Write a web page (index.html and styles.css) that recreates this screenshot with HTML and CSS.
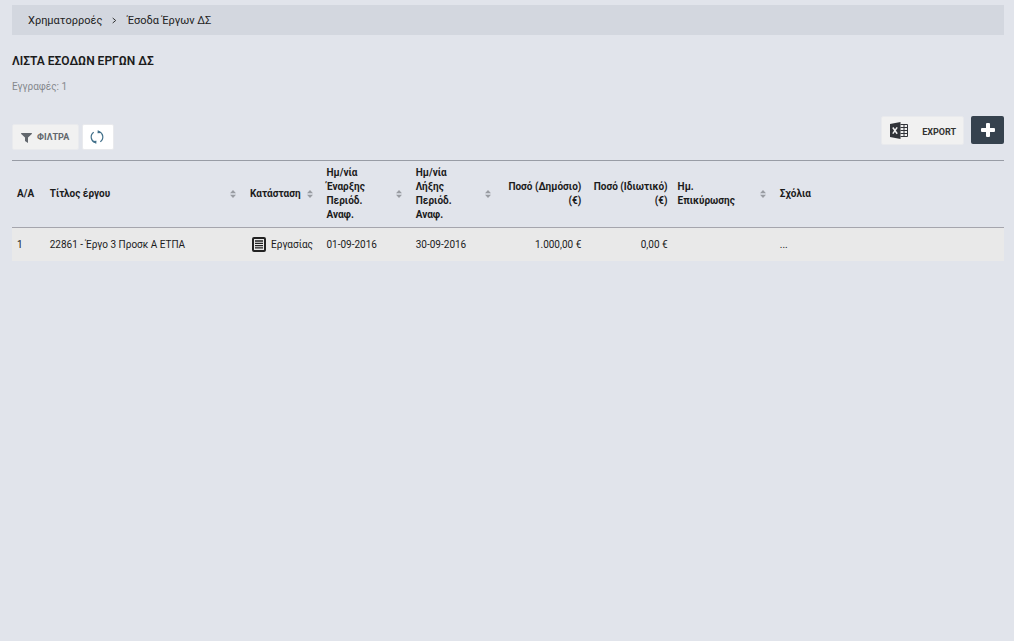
FILE: index.html
```html
<!DOCTYPE html>
<html lang="el">
<head>
<meta charset="utf-8">
<meta name="viewport" content="width=device-width, initial-scale=1">
<title>Έσοδα Έργων ΔΣ</title>
<link rel="stylesheet" href="styles.css">
</head>
<body>
<svg class="sprite" aria-hidden="true">
  <symbol id="sort" viewBox="0 0 6 8"><path d="M0 3.2 3 0l3 3.2zM0 4.8h6L3 8z"/></symbol>
</svg>
<nav class="breadcrumb" aria-label="Διαδρομή">
  <a href="#">Χρηματορροές</a>
  <svg class="chevron" viewBox="0 0 5 7" aria-hidden="true"><path d="m.7 1 3 2.500-3 2.500"/></svg>
  <a href="#">Έσοδα Έργων ΔΣ</a>
</nav>
<main>
  <h1>ΛΙΣΤΑ ΕΣΟΔΩΝ ΕΡΓΩΝ ΔΣ</h1>
  <p class="count">Εγγραφές: 1</p>
  <div class="toolbar">
    <div class="tools">
      <button class="btn filter" type="button">
        <svg width="11" height="11" viewBox="0 0 11 11" aria-hidden="true"><path fill="currentColor" d="M.5 1h10c.5 0 .6.500.3.900L7 5.500V11L4 9V5.500L.2 1.900C-.1 1.500 0 1 .5 1z"/></svg>
        ΦΙΛΤΡΑ
      </button>
      <button class="btn refresh" type="button" aria-label="Ανανέωση">
        <svg width="14" height="14" viewBox="0 0 14 14" aria-hidden="true"><g fill="none" stroke="currentColor" stroke-width="1.200"><path d="M5.200 12.500A5.800 5.800 0 0 1 3.700 2.200M8.800 1.500A5.800 5.800 0 0 1 10.300 11.800"/></g><path fill="currentColor" d="m2.500 11 4-.2-.3 3.200zM11.500 3l-4 .2L7.800 0z"/></svg>
      </button>
    </div>
    <div class="actions">
      <button class="btn export" type="button">
        <svg width="18" height="17" viewBox="0 0 18 17" aria-hidden="true"><path fill="#303338" d="M0 2 10.500 0v17L0 15z"/><path fill="none" stroke="#303338" d="M10.500 2.500h7v12h-7M10.500 5.500h7M10.500 8.500h7M10.500 11.500h7M14 2.500v12"/><path fill="none" stroke="#f1f1f1" stroke-width="1.500" d="m2.800 5.500 4.400 6.200M7.200 5.300l-4.400 6.400"/></svg>
        <span>EXPORT</span>
      </button>
      <button class="add" type="button" aria-label="Προσθήκη">
        <svg width="14" height="14" viewBox="0 0 14 14" aria-hidden="true"><path fill="#fff" d="M5 1q0-1 1-1h2q1 0 1 1v4h4q1 0 1 1v2q0 1-1 1H9v4q0 1-1 1H6q-1 0-1-1V9H1Q0 9 0 8V6q0-1 1-1h4z"/></svg>
      </button>
    </div>
  </div>
  <table>
    <colgroup>
      <col class="c-num"><col class="c-title"><col class="c-state"><col class="c-date"><col class="c-date"><col class="c-sum"><col class="c-sum"><col class="c-check"><col>
    </colgroup>
    <thead>
      <tr>
        <th scope="col">Α/Α</th>
        <th scope="col"><div class="sortable"><span>Τίτλος έργου</span><svg class="sort"><use href="#sort"/></svg></div></th>
        <th scope="col"><div class="sortable tight"><span>Κατάσταση</span><svg class="sort"><use href="#sort"/></svg></div></th>
        <th scope="col"><div class="sortable"><span>Ημ/νία Έναρξης Περιόδ. Αναφ.</span><svg class="sort"><use href="#sort"/></svg></div></th>
        <th scope="col"><div class="sortable"><span>Ημ/νία<br>Λήξης Περιόδ. Αναφ.</span><svg class="sort"><use href="#sort"/></svg></div></th>
        <th scope="col" class="amount">Ποσό (Δημόσιο) (€)</th>
        <th scope="col" class="amount">Ποσό (Ιδιωτικό) (€)</th>
        <th scope="col"><div class="sortable"><span>Ημ. Επικύρωσης</span><svg class="sort"><use href="#sort"/></svg></div></th>
        <th scope="col">Σχόλια</th>
      </tr>
    </thead>
    <tbody>
      <tr>
        <td>1</td>
        <td>22861 - Έργο 3 Προσκ Α ΕΤΠΑ</td>
        <td><div class="state"><svg width="14" height="15" viewBox="0 0 14 15" aria-hidden="true"><rect x="1" y="1" width="12" height="13" rx="1" fill="none" stroke="#222" stroke-width="2"/><path stroke="#222" stroke-width="1.300" d="M3 4h8M3 6.300h8M3 8.600h8M3 10.900h8"/></svg>Εργασίας</div></td>
        <td>01-09-2016</td>
        <td>30-09-2016</td>
        <td class="amount">1.000,00 €</td>
        <td class="amount">0,00 €</td>
        <td></td>
        <td>...</td>
      </tr>
    </tbody>
  </table>
</main>
</body>
</html>
```
FILE: styles.css
```css
* { box-sizing: border-box; }
body {
  margin: 0;
  padding: 5px 10px 20px 12px;
  background: #e1e4eb;
  color: #1b1b1b;
  font: 10px/14px Roboto, "Noto Sans", sans-serif;
}
.sprite { position: absolute; width: 0; height: 0; }
.breadcrumb {
  display: flex;
  align-items: center;
  gap: 10px;
  height: 30px;
  padding: 1px 16px 0;
  background: #d3d7df;
  font-size: 11px;
}
.breadcrumb a { color: #222; text-decoration: none; }
.chevron { width: 5px; height: 7px; fill: none; stroke: #333; }
h1 {
  margin: 18px 0 0;
  font-size: 12px;
  line-height: 16px;
  font-weight: 600;
}
.count { margin: 11px 0 0; color: #85888d; line-height: 14px; }
.toolbar {
  display: flex;
  justify-content: space-between;
  margin-top: 22px;
  padding-bottom: 10px;
}
.tools { display: flex; align-items: flex-end; gap: 3px; }
.actions { display: flex; align-items: flex-start; gap: 7px; padding-bottom: 5px; }
button { font: inherit; cursor: pointer; }
.btn {
  display: flex;
  align-items: center;
  height: 26px;
  border: 1px solid #e9eaed;
  border-radius: 2px;
  background: #f1f1f1;
  font-size: 9px;
  font-weight: 700;
}
.filter { gap: 5px; padding: 0 9px 0 8px; color: #62676d; }
.refresh { justify-content: center; width: 32px; padding: 0 3px 0 0; background: #fff; color: #42708a; }
.export { height: 29px; gap: 14px; padding: 0 7px 0 8px; color: #333; }
.export span { padding-top: 2px; }
.add {
  display: flex;
  align-items: center;
  justify-content: center;
  width: 33px;
  height: 28px;
  padding: 0;
  border: 0;
  border-radius: 2px;
  background: #36424e;
}
table { width: 100%; table-layout: fixed; border-collapse: separate; border-spacing: 0; border-top: 1px solid #989ca5; }
.c-num { width: 3.3%; }
.c-title { width: 20.2%; }
.c-state { width: 7.7%; }
.c-date { width: 9%; }
.c-sum { width: 8.7%; }
.c-check { width: 10.3%; }
th, td { padding: 5px; text-align: left; vertical-align: middle; }
th { font-weight: 700; color: #1b1b1b; border-bottom: 1px solid #a5a5ad; }
td { height: 33px; background: #e9e9e9; white-space: nowrap; }
th.amount, td.amount { text-align: right; }
.sortable { display: flex; align-items: center; justify-content: space-between; gap: 12px; padding-right: 4px; }
.sortable.tight { gap: 4px; padding-right: 3px; }
.sort { flex: none; width: 6px; height: 8px; fill: #999ca2; }
.state { display: flex; align-items: center; gap: 5px; padding-left: 2px; }
```
